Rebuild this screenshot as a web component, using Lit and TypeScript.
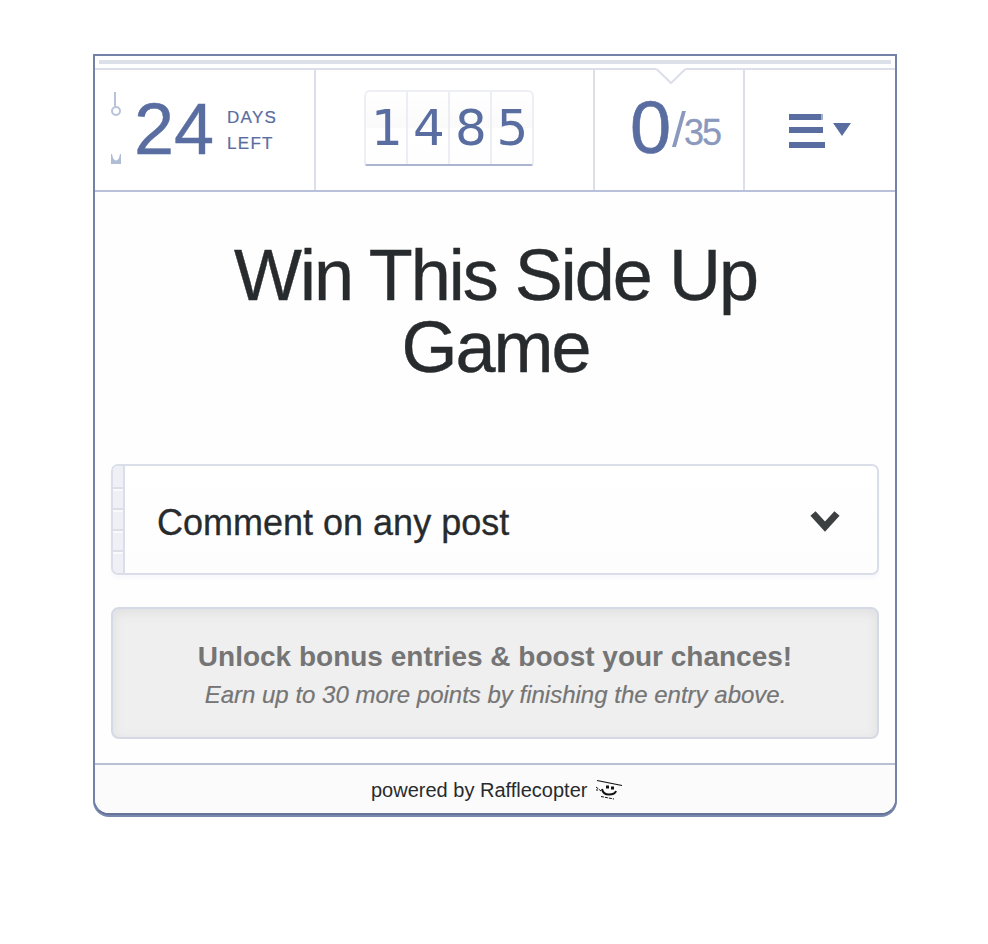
import { LitElement, html, css } from "lit";
import { customElement, property } from "lit/decorators.js";

@customElement("entry-counter")
class EntryCounter extends LitElement {
  @property() value = "0";
  static styles = css`
    :host { display: block; }
    .digits { display: flex; width: 170px; height: 76px; box-sizing: border-box;
      border: 2px solid #eeeef5; border-bottom: 2px solid #aab5d2; border-radius: 6px 6px 3px 3px; overflow: hidden;
      background: linear-gradient(#fff 0, #fafafa 50%, #fff 50%, #fefefe 100%); }
    .digit { width: 42px; flex: none; box-sizing: border-box; border-right: 2px solid #ededf4; padding-left: 2px; text-align: center;
      font: 50px/73px "DejaVu Sans", sans-serif; color: #596da1; }
    .digit:last-child { border-right: 0; width: 40px; padding-left: 1px; }
  `;
  render() {
    return html`<div class="digits">${[...this.value].map((d) => html`<div class="digit">${d}</div>`)}</div>`;
  }
}

@customElement("app-root")
class AppRoot extends LitElement {
  static styles = css`
    :host { display: block; height: 944px; background: #fff; overflow: hidden; color: #282b2d;
      font-family: "Liberation Sans", Arial, sans-serif; }
    .widget { width: 804px; height: 761px; margin: 54px 0 0 93px; box-sizing: border-box; display: flex;
      flex-direction: column; border: 2px solid #7482aa; border-bottom-color: #67749a; border-radius: 0 0 16px 16px;
      box-shadow: 0 2px 0 #7b88ad; overflow: hidden; background: #fefefe; }
    .progress { height: 12px; padding: 4px 4px 0; box-sizing: border-box; background: #fff; }
    .track { height: 4px; background: #dce0e9; }
    .stats { height: 124px; box-sizing: border-box; display: flex; border-top: 2px solid #dcdfe9;
      border-bottom: 2px solid #b8c1d9; background: #fff; color: #596da1; position: relative; }
    .cell { box-sizing: border-box; border-right: 2px solid #dcdfe9; height: 120px; display: flex; }
    .time { width: 221px; padding-left: 16px; }
    .timer { width: 10px; height: 73px; margin-top: 22px; flex: none; }
    .days { font-size: 72px; line-height: 118px; margin-left: 13px; width: 79px; -webkit-text-stroke: .4px; }
    .unit { font-size: 17px; line-height: 26px; letter-spacing: 1.3px; margin: 35px 0 0 14px; -webkit-text-stroke: .2px; }
    .total { width: 279px; padding: 20px 0 0 48px; }
    .mine { width: 150px; padding-left: 35px; align-items: baseline; line-height: 116px; }
    .zero { font-size: 74px; width: 42px; -webkit-text-stroke: .6px; }
    .slash { font-size: 50px; color: #8b99be; width: 11px; letter-spacing: -2px; position: relative; top: -6px; }
    .max { font-size: 36px; color: #8b99be; letter-spacing: -2px; position: relative; top: -8px; left: 1px; -webkit-text-stroke: .3px; }
    .menu { border: 0; padding: 43px 0 0 44px; }
    .notch { position: absolute; left: 560px; top: -2px; }
    .body { flex: 1; padding: 47px 16px 0; }
    h1 { font-weight: 400; font-size: 72px; line-height: 72px; letter-spacing: -2px; margin: 0 -1px 0 0; text-align: center; -webkit-text-stroke: .4px; }
    .entry { margin-top: 81px; height: 111px; box-sizing: border-box; border: 2px solid #dadee9; border-radius: 7px;
      display: flex; align-items: center; background: linear-gradient(#fff, #fdfdfd); box-shadow: 0 4px 3px #f9f9fc; overflow: hidden; }
    .perforation { width: 10px; align-self: stretch; border-right: 2px solid #dadee9; display: flex; flex-direction: column; background: #eef0f5; }
    .notchrow { height: 21px; box-sizing: border-box; border-bottom: 2px solid #dcdfe6; border-top: 2px solid #f9f9fb; }
    .notchrow:first-child { border-top: 0; height: 23px; }
    .notchrow:last-child { border-bottom: 0; }
    .label { font-size: 36px; margin: 7px auto 0 32px; -webkit-text-stroke: .3px; }
    .chevron { margin: 4px 37px 0 0; }
    .bonus { margin-top: 32px; height: 132px; box-sizing: border-box; border: 2px solid #d5d9e5; border-radius: 8px;
      background: #efefef; box-shadow: inset 0 3px 12px #dedede; color: #757575; text-align: center; padding-top: 31px; white-space: nowrap; }
    .strong { font-weight: 700; font-size: 28px; line-height: 34px; }
    .hint { font-style: italic; font-size: 24px; line-height: 42px; margin-left: 1px; -webkit-text-stroke: .2px; }
    .footer { height: 50px; box-sizing: border-box; border-top: 2px solid #b8c1d3; background: #fbfbfb; display: flex;
      align-items: center; padding: 2px 0 0 276px; font-size: 20px; }
    .logo { margin: 0 0 0 9px; }
  `;
  render() {
    return html`
      <div class="widget">
        <div class="progress"><div class="track"></div></div>
        <div class="stats">
          <svg class="notch" width="32" height="18"><path d="M1 0H31L16 15z" fill="#fff"/><path d="M1.500 1L16 15L30.500 1" fill="none" stroke="#dcdfe9" stroke-width="2"/></svg>
          <div class="cell time">
            <svg class="timer" viewBox="0 0 10 73"><path d="M4 0V14" stroke="#b8c3da" stroke-width="2"/><circle cx="5" cy="19" r="4" fill="none" stroke="#b8c3da" stroke-width="2"/><path d="M0 62H1L2 66Q5 71 8 66L9 62H10V72H0z" fill="#b1bdd5"/></svg>
            <div class="days">24</div><div class="unit">DAYS<br>LEFT</div>
          </div>
          <div class="cell total"><entry-counter value="1485"></entry-counter></div>
          <div class="cell mine"><span class="zero">0</span><span class="slash">/</span><span class="max">35</span></div>
          <div class="cell menu"><svg width="64" height="38" fill="#596da1"><path d="M0 1H32V7H0zM0 14H34V20H0zM0 29H36V35H0zM44 10H62L53 23z"/><path d="M32 1H34V7H32z" fill="#a5b0cf"/></svg></div>
        </div>
        <div class="body">
          <h1>Win This Side Up<br>Game</h1>
          <div class="entry">
            <div class="perforation">${[0, 1, 2, 3, 4].map(() => html`<div class="notchrow"></div>`)}</div>
            <div class="label">Comment on any post</div>
            <svg class="chevron" width="30" height="22"><path d="M3 2.500L15 15.500L27 2.500" fill="none" stroke="#3c4041" stroke-width="7"/></svg>
          </div>
          <div class="bonus">
            <div class="strong">Unlock bonus entries &amp; boost your chances!</div>
            <div class="hint">Earn up to 30 more points by finishing the entry above.</div>
          </div>
        </div>
        <div class="footer">powered by Rafflecopter
          <svg class="logo" width="28" height="22" fill="none" stroke="#111"><path d="M1 1.500L26 6.500" stroke-width="1.200"/><path d="M10 8H13M15 9H18" stroke-width="3"/><path d="M6 10Q7 15.500 13 15.500T20 12" stroke-width="2"/><path d="M0 8L5 12M0 11H2M5 17.500L18 20" stroke-dasharray="3 1"/></svg>
        </div>
      </div>`;
  }
}
